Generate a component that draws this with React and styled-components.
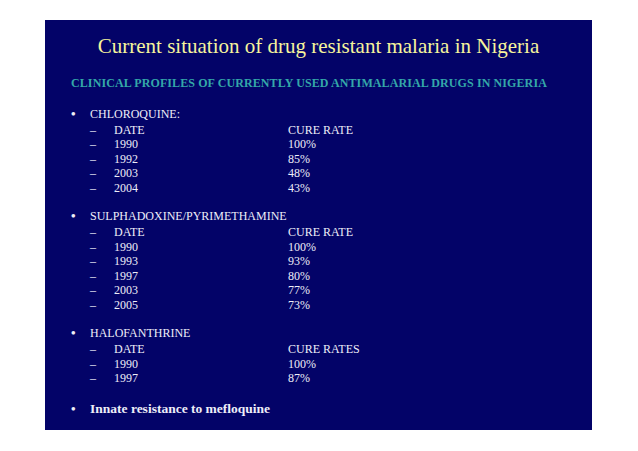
import React from "react";
import styled, { createGlobalStyle } from "styled-components";

const GlobalStyle = createGlobalStyle`
  html, body {
    margin: 0;
    padding: 0;
    background: #ffffff;
  }
  body {
    font-family: "Liberation Serif", "Times New Roman", serif;
  }
`;

const groups = [
  {
    name: "CHLOROQUINE:",
    head: "CURE RATE",
    rows: [
      ["1990", "100%"],
      ["1992", "85%"],
      ["2003", "48%"],
      ["2004", "43%"],
    ],
  },
  {
    name: "SULPHADOXINE/PYRIMETHAMINE",
    head: "CURE RATE",
    rows: [
      ["1990", "100%"],
      ["1993", "93%"],
      ["1997", "80%"],
      ["2003", "77%"],
      ["2005", "73%"],
    ],
  },
  {
    name: "HALOFANTHRINE",
    head: "CURE RATES",
    rows: [
      ["1990", "100%"],
      ["1997", "87%"],
    ],
  },
];

const Page = styled.div`
  padding: 20px 46px 21px 45px;
`;

const Slide = styled.section`
  width: 547px;
  height: 410px;
  box-sizing: border-box;
  background: #030368;
  padding: 14px 0 0 26px;
  color: #eeeef8;
`;

const Title = styled.h1`
  margin: 0 0 0 -26px;
  font-size: 21px;
  font-weight: normal;
  line-height: 24px;
  text-align: center;
  color: #f6f49c;
`;

const Subtitle = styled.h2`
  margin: 18px 0 0;
  font-size: 12px;
  font-weight: bold;
  line-height: 14px;
  letter-spacing: 0.1px;
  color: #34a8a8;
  white-space: nowrap;
`;

const List = styled.ul`
  list-style: none;
  margin: 16.5px 0 0;
  padding: 0;
`;

const Item = styled.li`
  margin-top: ${(p) => (p.$first ? 0 : p.$big ? 15 : 14)}px;
`;

const Line = styled.div`
  display: flex;
  font-size: ${(p) => (p.$big ? 13.5 : 12)}px;
  font-weight: ${(p) => (p.$big ? "bold" : "normal")};
  line-height: ${(p) => (p.$big ? 16 : 14.5)}px;
`;

const Bullet = styled.span`
  width: 19px;
  flex: none;
  font-size: 13px;
  font-weight: bold;
`;

const SubList = styled.ul`
  list-style: none;
  margin: 1.5px 0 0 19px;
  padding: 0;
`;

const Row = styled.li`
  display: flex;
  font-size: 12px;
  line-height: 14.5px;
`;

const Dash = styled.span`
  width: 24px;
  flex: none;
`;

const DateCell = styled.span`
  width: 174px;
  flex: none;
`;

const Group = ({ group, first }) => (
  <Item $first={first}>
    <Line>
      <Bullet>•</Bullet>
      <span>{group.name}</span>
    </Line>
    <SubList>
      <Row>
        <Dash>–</Dash>
        <DateCell>DATE</DateCell>
        <span>{group.head}</span>
      </Row>
      {group.rows.map(([year, rate]) => (
        <Row key={year}>
          <Dash>–</Dash>
          <DateCell>{year}</DateCell>
          <span>{rate}</span>
        </Row>
      ))}
    </SubList>
  </Item>
);

export default function App() {
  return (
    <>
      <GlobalStyle />
      <Page>
        <Slide>
          <Title>Current situation of drug resistant malaria in Nigeria</Title>
          <Subtitle>
            CLINICAL PROFILES OF CURRENTLY USED ANTIMALARIAL DRUGS IN NIGERIA
          </Subtitle>
          <List>
            {groups.map((g, i) => (
              <Group key={g.name} group={g} first={i === 0} />
            ))}
            <Item $big>
              <Line $big>
                <Bullet>•</Bullet>
                <span>Innate resistance to mefloquine</span>
              </Line>
            </Item>
          </List>
        </Slide>
      </Page>
    </>
  );
}
